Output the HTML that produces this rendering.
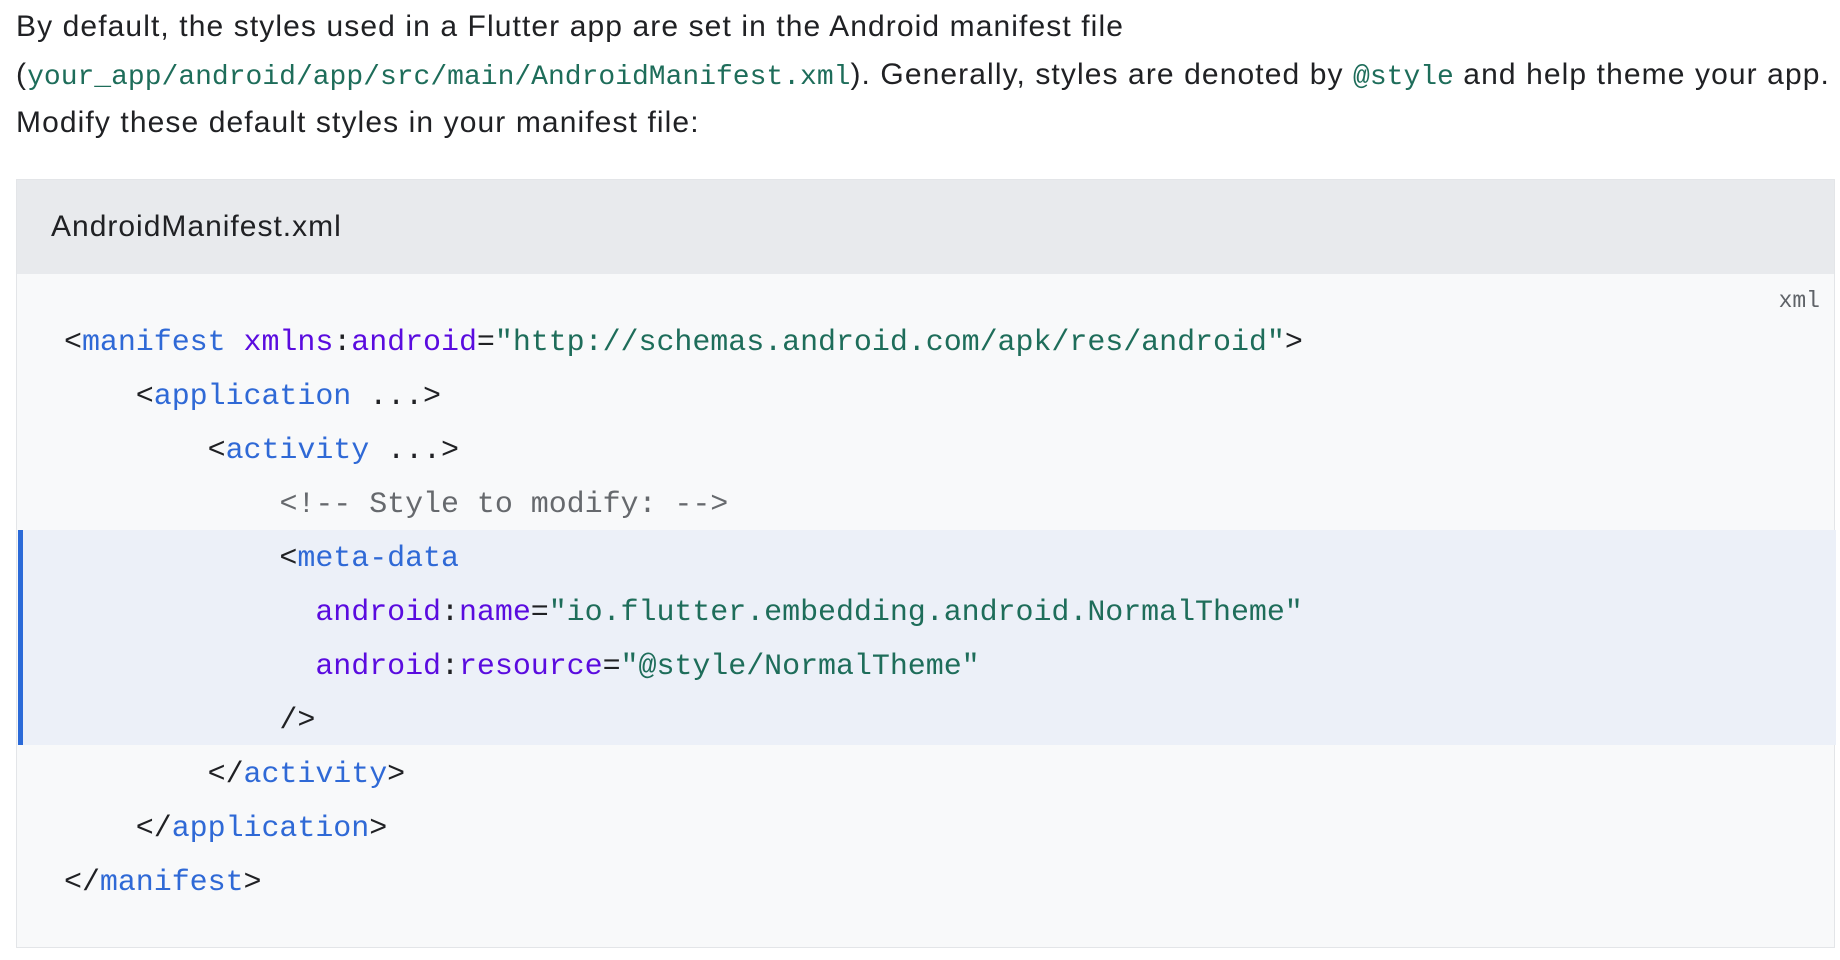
<!DOCTYPE html>
<html><head><meta charset="utf-8">
<style>
html,body{margin:0;padding:0;background:#fff;width:1840px;height:960px;overflow:hidden}
.p{position:absolute;left:16px;top:3px;width:1830px;font-family:"Liberation Sans",sans-serif;font-size:30px;line-height:48px;color:#202124;white-space:nowrap;letter-spacing:1.1px}
.p code{font-family:"Liberation Mono",monospace;font-size:28px;color:#1e6d5a;letter-spacing:0;line-height:1}
.blk{position:absolute;left:16px;top:179px;width:1819px;height:769px;background:#f8f9fa;border:1px solid #e3e5e8;box-sizing:border-box}
.hdr{position:absolute;left:0;top:0;right:0;height:94px;background:#e8eaed;font-family:"Liberation Sans",sans-serif;font-size:30px;color:#202124;line-height:94px;padding-left:34px;letter-spacing:1px}
.lang{position:absolute;right:14px;top:108px;font-family:"Liberation Mono",monospace;font-size:23px;color:#5f6368}
.hl{position:absolute;left:1px;top:350px;width:1818px;height:215px;background:#ecf0f8;border-left:5px solid #2b6ad8;box-sizing:border-box}
pre{position:absolute;left:47px;top:136px;margin:0;font-family:"Liberation Mono",monospace;font-size:30px;line-height:54px;color:#202124;letter-spacing:-0.05px}
.t{color:#2f69d6}.a{color:#5a0bdf}.s{color:#1e6d5a}.c{color:#66696d}
</style></head><body>
<div class="p">By default, the styles used in a Flutter app are set in the Android manifest file<br>(<code>your_app/android/app/src/main/AndroidManifest.xml</code>). Generally, styles are denoted by <code>@style</code> and help theme your app.<br>Modify these default styles in your manifest file:</div>
<div class="blk">
<div class="hdr">AndroidManifest.xml</div>
<div class="lang">xml</div>
<div class="hl"></div>
<pre>&lt;<span class="t">manifest</span> <span class="a">xmlns</span>:<span class="a">android</span>=<span class="s">"http://schemas.android.com/apk/res/android"</span>&gt;
    &lt;<span class="t">application</span> ...&gt;
        &lt;<span class="t">activity</span> ...&gt;
            <span class="c">&lt;!-- Style to modify: --&gt;</span>
            &lt;<span class="t">meta-data</span>
              <span class="a">android</span>:<span class="a">name</span>=<span class="s">"io.flutter.embedding.android.NormalTheme"</span>
              <span class="a">android</span>:<span class="a">resource</span>=<span class="s">"@style/NormalTheme"</span>
            /&gt;
        &lt;/<span class="t">activity</span>&gt;
    &lt;/<span class="t">application</span>&gt;
&lt;/<span class="t">manifest</span>&gt;</pre>
</div>
</body></html>
